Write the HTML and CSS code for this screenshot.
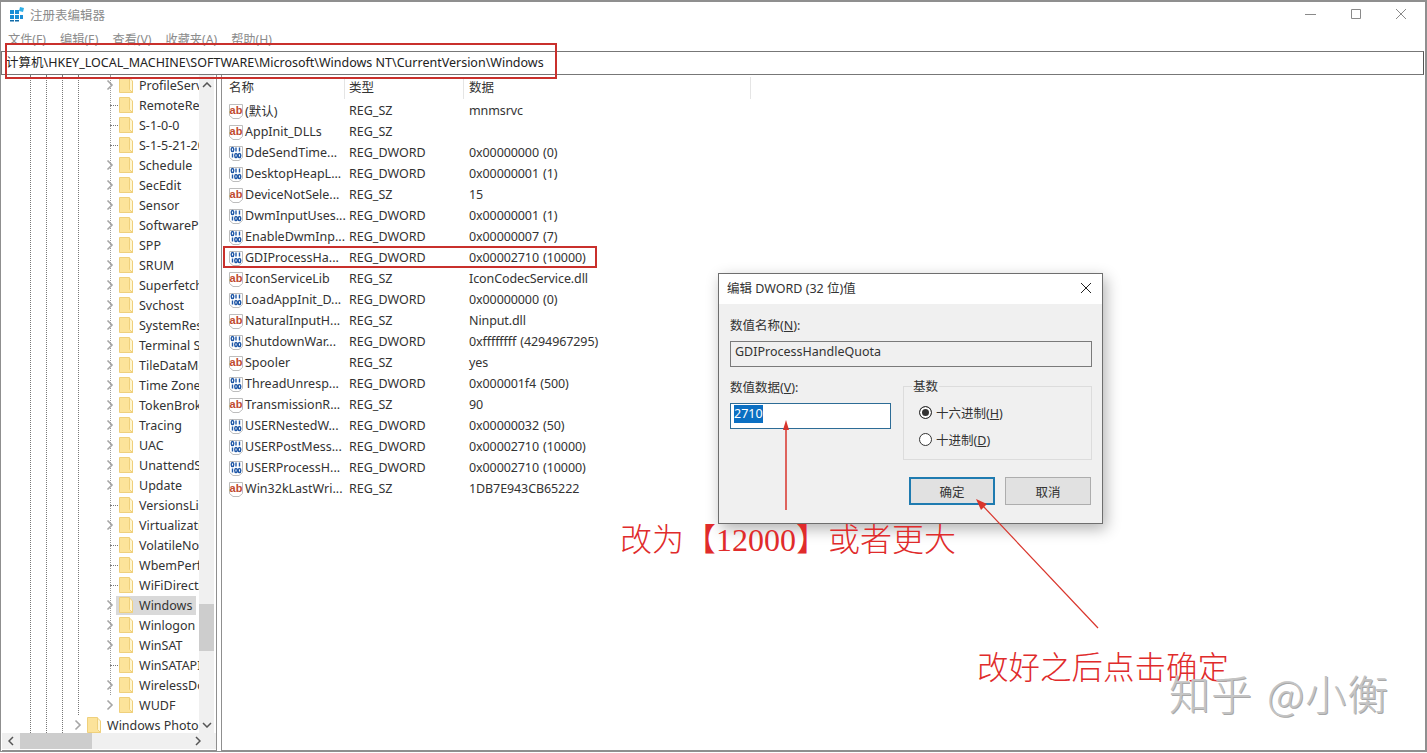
FILE: index.html
```html
<!DOCTYPE html>
<html lang="zh-CN">

<head>
	<meta charset="UTF-8">
	<title>注册表编辑器</title>
	<link rel="stylesheet" href="styles.css">
</head>

<body>

	<svg class="defs" width="0" height="0">
		<symbol id="folder" viewBox="0 0 14 16">
			<path d="M0.5 0.5H10.5V12.5L13.500 15.500H0.500Z" fill="#fce39a" stroke="#efd07c"/>
			<path d="M10.500 1V12.500L13.500 15.500V4Z" fill="#fff6d2" stroke="#efd07c"/>
		</symbol>
		<symbol id="chev" viewBox="0 0 8 12">
			<path d="M1.500 1.500L6 6L1.500 10.500" fill="none" stroke="#a6a6a6" stroke-width="1.600"/>
		</symbol>
		<symbol id="ic-sz" viewBox="0 0 16 16">
			<path d="M1.500 1.500H14.500V12.500L11 15.500H5L1.500 12.500Z" fill="#fff" stroke="#bdbdbd"/>
			<text x="8" y="10.500" class="ic-ab">ab</text>
		</symbol>
		<symbol id="ic-dw" viewBox="0 0 16 16">
			<path d="M1.500 1.500H14.500V12.500L11 15.500H5L1.500 12.500Z" fill="#fff" stroke="#bdbdbd"/>
			<path d="M4.500 2.500C2.800 2.500 2.800 6.500 4.500 6.500S6.200 2.500 4.500 2.500ZM8 2.500V6.500M11.500 2.500V6.500M4.500 8.500V12.500M8 8.500C6.300 8.500 6.300 12.500 8 12.500S9.700 8.500 8 8.500ZM11.500 8.500C9.800 8.500 9.800 12.500 11.500 12.500S13.200 8.500 11.500 8.500Z" fill="none" stroke="#1f57a6" stroke-width="1.400"/>
		</symbol>
	</svg>

	<div class="window">
		<header class="titlebar">
			<svg class="app-icon" width="16" height="16" viewBox="0 0 16 16">
				<path d="M1 4h4v4H1zM6 4h4v4H6zM1 9h4v4H1zM6 9h4v4H6zM11 9h3v4h-3z" fill="#1b8fd6"/>
				<path d="M1 14h4v1.500H1zM6 14h4v1.500H6z" fill="#0f6aa8"/>
				<path d="M11 1l4 1-1 4-4-1z" fill="#2fb0e8"/>
			</svg>
			<span class="title-text">注册表编辑器</span>
			<div class="win-buttons">
				<svg width="12" height="12" viewBox="0 0 12 12"><path d="M0 6.500H11" stroke="#8a8a8a"/></svg>
				<svg width="12" height="12" viewBox="0 0 12 12"><path d="M1.500 1.500H10.500V10.500H1.500Z" fill="none" stroke="#8a8a8a"/></svg>
				<svg width="12" height="12" viewBox="0 0 12 12"><path d="M1 1L11 11M11 1L1 11" stroke="#8a8a8a"/></svg>
			</div>
		</header>

		<nav class="menubar">
			<span>文件(F)</span>
			<span>编辑(E)</span>
			<span>查看(V)</span>
			<span>收藏夹(A)</span>
			<span>帮助(H)</span>
		</nav>

		<div class="address">计算机\HKEY_LOCAL_MACHINE\SOFTWARE\Microsoft\Windows NT\CurrentVersion\Windows</div>

		<div class="panes">
			<aside class="tree">
				<div class="tree-body">
					<div class="guides"><i></i><i></i><i></i><i></i><i></i></div>
					<ul class="tree-list">
						<li><svg class="chev"><use href="#chev"/></svg><svg class="folder"><use href="#folder"/></svg><span>ProfileService</span></li>
						<li class="leaf"><svg class="folder"><use href="#folder"/></svg><span>RemoteRegistry</span></li>
						<li class="leaf"><svg class="folder"><use href="#folder"/></svg><span>S-1-0-0</span></li>
						<li class="leaf"><svg class="folder"><use href="#folder"/></svg><span>S-1-5-21-2000</span></li>
						<li><svg class="chev"><use href="#chev"/></svg><svg class="folder"><use href="#folder"/></svg><span>Schedule</span></li>
						<li><svg class="chev"><use href="#chev"/></svg><svg class="folder"><use href="#folder"/></svg><span>SecEdit</span></li>
						<li><svg class="chev"><use href="#chev"/></svg><svg class="folder"><use href="#folder"/></svg><span>Sensor</span></li>
						<li><svg class="chev"><use href="#chev"/></svg><svg class="folder"><use href="#folder"/></svg><span>SoftwareProtection</span></li>
						<li><svg class="chev"><use href="#chev"/></svg><svg class="folder"><use href="#folder"/></svg><span>SPP</span></li>
						<li><svg class="chev"><use href="#chev"/></svg><svg class="folder"><use href="#folder"/></svg><span>SRUM</span></li>
						<li><svg class="chev"><use href="#chev"/></svg><svg class="folder"><use href="#folder"/></svg><span>Superfetch</span></li>
						<li><svg class="chev"><use href="#chev"/></svg><svg class="folder"><use href="#folder"/></svg><span>Svchost</span></li>
						<li><svg class="chev"><use href="#chev"/></svg><svg class="folder"><use href="#folder"/></svg><span>SystemRestore</span></li>
						<li><svg class="chev"><use href="#chev"/></svg><svg class="folder"><use href="#folder"/></svg><span>Terminal Server</span></li>
						<li><svg class="chev"><use href="#chev"/></svg><svg class="folder"><use href="#folder"/></svg><span>TileDataModel</span></li>
						<li><svg class="chev"><use href="#chev"/></svg><svg class="folder"><use href="#folder"/></svg><span>Time Zones</span></li>
						<li><svg class="chev"><use href="#chev"/></svg><svg class="folder"><use href="#folder"/></svg><span>TokenBroker</span></li>
						<li><svg class="chev"><use href="#chev"/></svg><svg class="folder"><use href="#folder"/></svg><span>Tracing</span></li>
						<li><svg class="chev"><use href="#chev"/></svg><svg class="folder"><use href="#folder"/></svg><span>UAC</span></li>
						<li><svg class="chev"><use href="#chev"/></svg><svg class="folder"><use href="#folder"/></svg><span>UnattendSettings</span></li>
						<li><svg class="chev"><use href="#chev"/></svg><svg class="folder"><use href="#folder"/></svg><span>Update</span></li>
						<li class="leaf"><svg class="folder"><use href="#folder"/></svg><span>VersionsList</span></li>
						<li><svg class="chev"><use href="#chev"/></svg><svg class="folder"><use href="#folder"/></svg><span>Virtualization</span></li>
						<li class="leaf"><svg class="folder"><use href="#folder"/></svg><span>VolatileNotifications</span></li>
						<li class="leaf"><svg class="folder"><use href="#folder"/></svg><span>WbemPerf</span></li>
						<li class="leaf"><svg class="folder"><use href="#folder"/></svg><span>WiFiDirectAPI</span></li>
						<li class="selected"><svg class="chev"><use href="#chev"/></svg><svg class="folder"><use href="#folder"/></svg><span>Windows</span></li>
						<li><svg class="chev"><use href="#chev"/></svg><svg class="folder"><use href="#folder"/></svg><span>Winlogon</span></li>
						<li><svg class="chev"><use href="#chev"/></svg><svg class="folder"><use href="#folder"/></svg><span>WinSAT</span></li>
						<li class="leaf"><svg class="folder"><use href="#folder"/></svg><span>WinSATAPI</span></li>
						<li><svg class="chev"><use href="#chev"/></svg><svg class="folder"><use href="#folder"/></svg><span>WirelessDocking</span></li>
						<li><svg class="chev"><use href="#chev"/></svg><svg class="folder"><use href="#folder"/></svg><span>WUDF</span></li>
						<li class="outdent"><svg class="chev"><use href="#chev"/></svg><svg class="folder"><use href="#folder"/></svg><span>Windows Photo Viewer</span></li>
					</ul>
					<div class="vscroll">
						<svg width="10" height="6" viewBox="0 0 10 6"><path d="M1 5L5 1L9 5" fill="none" stroke="#555" stroke-width="1.500"/></svg>
						<div class="vthumb"></div>
						<svg width="10" height="6" viewBox="0 0 10 6"><path d="M1 1L5 5L9 1" fill="none" stroke="#555" stroke-width="1.500"/></svg>
					</div>
				</div>
				<div class="hscroll">
					<svg width="6" height="10" viewBox="0 0 6 10"><path d="M5 1L1 5L5 9" fill="none" stroke="#555" stroke-width="1.500"/></svg>
					<div class="hthumb"></div>
					<svg width="6" height="10" viewBox="0 0 6 10"><path d="M1 1L5 5L1 9" fill="none" stroke="#555" stroke-width="1.500"/></svg>
				</div>
			</aside>

			<main class="values">
				<div class="row head">
					<span class="c-name">名称</span><span class="c-type">类型</span><span class="c-data">数据</span>
				</div>
				<div class="row"><svg class="ic"><use href="#ic-sz"/></svg><span class="c-name">(默认)</span><span class="c-type">REG_SZ</span><span class="c-data">mnmsrvc</span></div>
				<div class="row"><svg class="ic"><use href="#ic-sz"/></svg><span class="c-name">AppInit_DLLs</span><span class="c-type">REG_SZ</span><span class="c-data"></span></div>
				<div class="row"><svg class="ic"><use href="#ic-dw"/></svg><span class="c-name">DdeSendTime...</span><span class="c-type">REG_DWORD</span><span class="c-data">0x00000000 (0)</span></div>
				<div class="row"><svg class="ic"><use href="#ic-dw"/></svg><span class="c-name">DesktopHeapL...</span><span class="c-type">REG_DWORD</span><span class="c-data">0x00000001 (1)</span></div>
				<div class="row"><svg class="ic"><use href="#ic-sz"/></svg><span class="c-name">DeviceNotSele...</span><span class="c-type">REG_SZ</span><span class="c-data">15</span></div>
				<div class="row"><svg class="ic"><use href="#ic-dw"/></svg><span class="c-name">DwmInputUses...</span><span class="c-type">REG_DWORD</span><span class="c-data">0x00000001 (1)</span></div>
				<div class="row"><svg class="ic"><use href="#ic-dw"/></svg><span class="c-name">EnableDwmInp...</span><span class="c-type">REG_DWORD</span><span class="c-data">0x00000007 (7)</span></div>
				<div class="row"><svg class="ic"><use href="#ic-dw"/></svg><span class="c-name">GDIProcessHa...</span><span class="c-type">REG_DWORD</span><span class="c-data">0x00002710 (10000)</span></div>
				<div class="row"><svg class="ic"><use href="#ic-sz"/></svg><span class="c-name">IconServiceLib</span><span class="c-type">REG_SZ</span><span class="c-data">IconCodecService.dll</span></div>
				<div class="row"><svg class="ic"><use href="#ic-dw"/></svg><span class="c-name">LoadAppInit_D...</span><span class="c-type">REG_DWORD</span><span class="c-data">0x00000000 (0)</span></div>
				<div class="row"><svg class="ic"><use href="#ic-sz"/></svg><span class="c-name">NaturalInputH...</span><span class="c-type">REG_SZ</span><span class="c-data">Ninput.dll</span></div>
				<div class="row"><svg class="ic"><use href="#ic-dw"/></svg><span class="c-name">ShutdownWar...</span><span class="c-type">REG_DWORD</span><span class="c-data">0xffffffff (4294967295)</span></div>
				<div class="row"><svg class="ic"><use href="#ic-sz"/></svg><span class="c-name">Spooler</span><span class="c-type">REG_SZ</span><span class="c-data">yes</span></div>
				<div class="row"><svg class="ic"><use href="#ic-dw"/></svg><span class="c-name">ThreadUnresp...</span><span class="c-type">REG_DWORD</span><span class="c-data">0x000001f4 (500)</span></div>
				<div class="row"><svg class="ic"><use href="#ic-sz"/></svg><span class="c-name">TransmissionR...</span><span class="c-type">REG_SZ</span><span class="c-data">90</span></div>
				<div class="row"><svg class="ic"><use href="#ic-dw"/></svg><span class="c-name">USERNestedW...</span><span class="c-type">REG_DWORD</span><span class="c-data">0x00000032 (50)</span></div>
				<div class="row"><svg class="ic"><use href="#ic-dw"/></svg><span class="c-name">USERPostMess...</span><span class="c-type">REG_DWORD</span><span class="c-data">0x00002710 (10000)</span></div>
				<div class="row"><svg class="ic"><use href="#ic-dw"/></svg><span class="c-name">USERProcessH...</span><span class="c-type">REG_DWORD</span><span class="c-data">0x00002710 (10000)</span></div>
				<div class="row"><svg class="ic"><use href="#ic-sz"/></svg><span class="c-name">Win32kLastWri...</span><span class="c-type">REG_SZ</span><span class="c-data">1DB7E943CB65222</span></div>
			</main>
		</div>
	</div>

	<section class="dialog">
		<div class="dlg-title">
			<span>编辑 DWORD (32 位)值</span>
			<svg width="12" height="12" viewBox="0 0 12 12"><path d="M1 1L11 11M11 1L1 11" stroke="#222"/></svg>
		</div>
		<div class="dlg-body">
			<label class="dlg-label">数值名称(<u>N</u>):</label>
			<div class="dlg-field name-field">GDIProcessHandleQuota</div>
			<div class="dlg-columns">
				<div class="data-col">
					<label class="dlg-label">数值数据(<u>V</u>):</label>
					<div class="dlg-field value-field"><span class="sel">2710</span></div>
				</div>
				<fieldset class="base-group">
					<legend>基数</legend>
					<div class="radio on"><i></i><span>十六进制(<u>H</u>)</span></div>
					<div class="radio"><i></i><span>十进制(<u>D</u>)</span></div>
				</fieldset>
			</div>
			<div class="dlg-buttons">
				<button class="btn default">确定</button>
				<button class="btn">取消</button>
			</div>
		</div>
	</section>

	<!-- annotations drawn over the screenshot -->
	<div class="mark mark-address"></div>
	<div class="mark mark-row"></div>
	<svg class="arrows" width="1427" height="753" viewBox="0 0 1427 753">
		<path d="M786 510V428" stroke="#d9352c" stroke-width="1.500"/>
		<path d="M786 420L783 430H789Z" fill="#d9352c"/>
		<path d="M1098 628L983 506" stroke="#d9352c" stroke-width="1.200"/>
		<path d="M976 499L981 510L987 504Z" fill="#d9352c"/>
	</svg>
	<div class="note note-a">改为【<span class="num">12000</span>】或者更大</div>
	<div class="note note-b">改好之后点击确定</div>
	<div class="watermark">知乎 @小衡</div>

</body>

</html>
```

FILE: styles.css
```css
* {
	box-sizing: border-box;
}

html,
body {
	margin: 0;
	height: 753px;
	overflow: hidden;
	background-color: #fff;
}

body {
	position: relative;
	font-family: "Noto Sans", "Noto Sans CJK SC", sans-serif;
	font-size: 12.5px;
	color: #333;
}

.defs {
	position: absolute;
}

.ic-ab {
	font-family: "Liberation Sans", sans-serif;
	font-size: 11px;
	font-weight: bold;
	fill: #bf4a30;
	text-anchor: middle;
}

.window {
	display: flex;
	flex-direction: column;
	height: 752px;
	border: 1px solid #8f8f8f;
	border-top-width: 2px;
	border-right-width: 2px;
}

.titlebar {
	display: flex;
	align-items: center;
	height: 28px;
	padding: 0 0 4px 8px;
	flex-shrink: 0;
}

.title-text {
	margin-left: 5px;
	color: #8c8c8c;
}

.win-buttons {
	display: flex;
	gap: 33px;
	margin-left: auto;
	margin-right: 18px;
}

.menubar {
	display: flex;
	gap: 14px;
	height: 21px;
	padding-left: 7px;
	color: #8c8c8c;
	font-size: 12.2px;
	line-height: 20px;
	flex-shrink: 0;
}

.address {
	height: 24px;
	border: 1px solid #777;
	border-right-color: #555;
	margin-right: 1px;
	padding-left: 4px;
	line-height: 21px;
	color: #222;
	white-space: nowrap;
	flex-shrink: 0;
}

.panes {
	display: flex;
	gap: 4px;
	flex: 1;
	min-height: 0;
	padding-left: 1px;
}

.tree {
	display: flex;
	flex-direction: column;
	width: 215px;
	border-right: 1px solid #8f8f8f;
	border-bottom: 1px solid #8f8f8f;
	flex-shrink: 0;
}

.tree-body {
	position: relative;
	display: flex;
	flex: 1;
	min-height: 0;
	overflow: hidden;
}

.guides {
	position: absolute;
	top: 0;
	bottom: 0;
	left: 0;
	display: flex;
	gap: 15px;
	padding-left: 28px;
}

.guides i {
	width: 1px;
	border-left: 1px dotted #777;
}

.guides i:nth-child(4) {
	margin-bottom: 18px;
}

.guides i:nth-child(5) {
	margin-left: 16px;
	margin-bottom: 38px;
	border-left-color: #999;
}

.tree-list {
	list-style: none;
	margin: 0;
	padding: 0;
	flex: 1;
	min-width: 0;
	overflow: hidden;
	z-index: 1;
}

.tree-list li {
	display: flex;
	align-items: center;
	height: 20px;
	padding-left: 104px;
	white-space: nowrap;
	overflow: hidden;
}

.tree-list li > * {
	flex-shrink: 0;
}

.tree-list li span {
	margin-left: 6px;
	color: #333;
}

.tree-list .leaf {
	padding-left: 117px;
}

.tree-list .leaf::before {
	content: "";
	flex-shrink: 0;
	width: 8px;
	margin-left: -9px;
	margin-right: 1px;
	border-top: 1px dotted #777;
}

.tree-list .outdent {
	padding-left: 72px;
}

.tree-list .selected span {
	width: 57px;
	padding: 1px 0;
	background-color: #d9d9d9;
	box-shadow: -23px 0 0 #d9d9d9;
}

.chev {
	width: 8px;
	height: 12px;
	margin-right: 5px;
}

.folder {
	position: relative;
	z-index: 1;
	width: 14px;
	height: 16px;
}

.vscroll {
	display: flex;
	flex-direction: column;
	align-items: center;
	justify-content: space-between;
	width: 15px;
	margin-right: 2px;
	padding: 7px 0 5px;
	background-color: #f0f0f0;
	flex-shrink: 0;
	z-index: 2;
}

.vthumb {
	width: 15px;
	height: 47px;
	margin-top: auto;
	margin-bottom: 71px;
	background-color: #cdcdcd;
}

.hscroll {
	display: flex;
	align-items: center;
	height: 16px;
	margin-bottom: 1px;
	padding: 0 15px 0 6px;
	background-color: #f0f0f0;
	flex-shrink: 0;
}

.hthumb {
	width: 72px;
	height: 16px;
	margin-left: 6px;
	margin-right: auto;
	background-color: #cdcdcd;
}

.values {
	flex: 1;
	border-left: 1px solid #8f8f8f;
	border-bottom: 1px solid #8f8f8f;
	padding-top: 2px;
}

.row {
	display: flex;
	align-items: center;
	height: 21px;
	padding-left: 6px;
	white-space: nowrap;
}

.row.head {
	height: 22px;
	padding-left: 7px;
	padding-bottom: 4px;
	margin-bottom: 1px;
	background-image: linear-gradient(#e5e5e5, #e5e5e5), linear-gradient(#e5e5e5, #e5e5e5), linear-gradient(#e5e5e5, #e5e5e5);
	background-size: 1px 100%;
	background-repeat: no-repeat;
	background-position: 122px 0, 241px 0, 528px 0;
}

.ic {
	width: 16px;
	height: 16px;
	flex-shrink: 0;
}

.c-name {
	width: 104px;
	margin-left: 1px;
}

.head .c-name {
	width: 120px;
	margin-left: 0;
}

.c-type {
	width: 120px;
}

.c-data {
	letter-spacing: -0.1px;
	word-spacing: 1px;
}

.dialog {
	position: absolute;
	left: 718px;
	top: 273px;
	width: 385px;
	height: 251px;
	display: flex;
	flex-direction: column;
	border: 1px solid #6e6e6e;
	background-color: #f0f0f0;
	box-shadow: 3px 5px 14px rgba(0, 0, 0, 0.3);
	color: #333;
	z-index: 3;
}

.dlg-title {
	display: flex;
	align-items: center;
	justify-content: space-between;
	height: 30px;
	padding: 0 10px 3px 8px;
	background-color: #fff;
	flex-shrink: 0;
}

.dlg-body {
	padding: 13px 10px 0 11px;
}

.dlg-label {
	display: block;
	line-height: 17px;
}

.dlg-field {
	height: 26px;
	margin-top: 7px;
	padding-left: 3px;
	border: 1px solid #7a7a7a;
	line-height: 20px;
	background-color: #f0f0f0;
}

.name-field {
	padding-left: 4px;
}

.dlg-columns {
	display: flex;
	justify-content: space-between;
	margin-top: 12px;
}

.data-col {
	width: 161px;
}

.value-field {
	margin-top: 7px;
	border-color: #2d6c96;
	background-color: #fff;
}

.sel {
	display: inline-block;
	background-color: #0b6fc2;
	color: #fff;
	line-height: 18px;
}

.base-group {
	position: relative;
	width: 189px;
	height: 74px;
	margin: 7px 0 0;
	padding: 16px 0 0 15px;
	border: 1px solid #dcdcdc;
}

.base-group legend {
	position: absolute;
	top: -8px;
	left: 8px;
	padding: 0 1px;
	background-color: #f0f0f0;
	line-height: 15px;
}

.radio {
	display: flex;
	align-items: center;
	gap: 4px;
	height: 18px;
	margin-bottom: 9px;
}

.radio i {
	width: 13px;
	height: 13px;
	border: 1px solid #333;
	border-radius: 50%;
	background-color: #fff;
	flex-shrink: 0;
}

.radio.on i {
	background-color: #333;
	box-shadow: inset 0 0 0 2px #fff;
}

.dlg-buttons {
	display: flex;
	justify-content: flex-end;
	gap: 10px;
	margin-top: 17px;
	padding-right: 1px;
}

.btn {
	width: 86px;
	height: 28px;
	border: 1px solid #adadad;
	background-color: #e1e1e1;
	font: inherit;
	color: #333;
}

.btn.default {
	border: 2px solid #1f7bb0;
}

.mark {
	position: absolute;
	border-style: solid;
	border-color: #c9302c;
	z-index: 4;
}

.mark-address {
	left: 5px;
	top: 43px;
	width: 552px;
	height: 36px;
	border-width: 2px;
}

.mark-row {
	left: 223px;
	top: 246px;
	width: 374px;
	height: 22px;
	border-width: 2px;
}

.arrows {
	position: absolute;
	left: 0;
	top: 0;
	z-index: 5;
}

.note {
	position: absolute;
	color: #e02b2b;
	font-family: "Noto Sans CJK SC", sans-serif;
	font-weight: 300;
	white-space: nowrap;
	z-index: 5;
}

.note .num {
	font-family: "Liberation Serif", serif;
}

.note-a {
	left: 620px;
	top: 514px;
	font-size: 32px;
	line-height: 46px;
}

.note-b {
	left: 977px;
	top: 642px;
	font-size: 31.500px;
	line-height: 46px;
}

.watermark {
	position: absolute;
	left: 1169px;
	top: 665px;
	color: #c4c4c4;
	font-family: "Noto Sans CJK SC", sans-serif;
	font-size: 41px;
	font-weight: 300;
	line-height: 54px;
	letter-spacing: 1px;
	word-spacing: 4px;
	white-space: nowrap;
	text-shadow: 1px 1px 0 #a8a8a8;
	z-index: 6;
}
```
